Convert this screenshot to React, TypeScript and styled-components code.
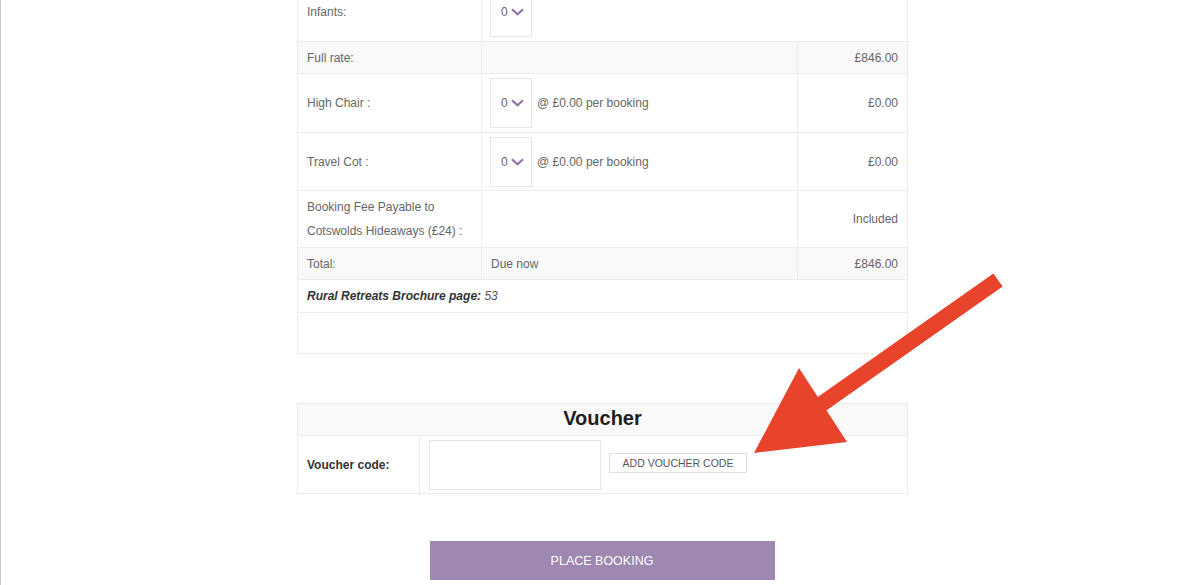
import React from 'react'
import styled, { createGlobalStyle } from 'styled-components'

const GlobalStyle = createGlobalStyle`
  html, body {
    margin: 0;
    padding: 0;
    background: #fff;
  }
  body {
    font-family: "Liberation Sans", Arial, sans-serif;
  }
`;

const Page = styled.div`
  position: relative;
  height: 585px;
  overflow: hidden;
  border-left: 1px solid #c5c9cd;
  padding-left: 3px;
  box-sizing: border-box;
`;

const Content = styled.div`
  width: 610px;
  margin: -18px auto 0;
`;

const Table = styled.table`
  width: 100%;
  border-collapse: collapse;
  table-layout: fixed;
  border: 1px solid #ececec;
  font-size: 12px;
  color: #666;
`;

const Row = styled.tr<{ $shade?: boolean; $pad?: number }>`
  background: ${p => (p.$shade ? '#f9f9f9' : '#fff')};
  td {
    padding-top: ${p => p.$pad ?? 4}px;
    padding-bottom: ${p => p.$pad ?? 4}px;
  }
`;

const Cell = styled.td<{ $right?: boolean; $tall?: number }>`
  border: 1px solid #ececec;
  padding: 4px 9px;
  line-height: 24px;
  vertical-align: middle;
  text-align: ${p => (p.$right ? 'right' : 'left')};
  height: ${p => (p.$tall ? `${p.$tall}px` : 'auto')};
  box-sizing: border-box;
`;

const OptionCell = styled(Cell)`
  padding-left: 8px;
`;

const Picker = styled.span`
  display: inline-flex;
  align-items: center;
  gap: 3px;
  box-sizing: border-box;
  width: 42px;
  height: 50px;
  padding-left: 10px;
  border: 1px solid #e6e6e6;
  background: #fff;
  vertical-align: middle;
  color: #666;
`;

const PerBooking = styled.span`
  margin-left: 5px;
  vertical-align: middle;
`;

const Brochure = styled.span`
  font-style: italic;
  color: #555;
  b {
    color: #333;
  }
`;

const VoucherTable = styled(Table)`
  margin-top: 49px;
`;

const VoucherHead = styled.th`
  background: #f9f9f9;
  border: 1px solid #ececec;
  font-size: 20px;
  font-weight: bold;
  color: #1e1e1e;
  height: 31px;
  padding: 0;
  line-height: 29px;
  vertical-align: top;
`;

const VoucherLabel = styled.td`
  border: 1px solid #ececec;
  padding: 0 9px;
  font-weight: bold;
  color: #333;
  height: 57px;
`;

const VoucherField = styled.td`
  border: 1px solid #ececec;
  padding: 0 9px;
  vertical-align: middle;
`;

const FieldRow = styled.div`
  display: flex;
  align-items: center;
  gap: 8px;
`;

const CodeInput = styled.input`
  box-sizing: border-box;
  width: 172px;
  height: 50px;
  border: 1px solid #e4e4e4;
  outline: none;
  font: inherit;
`;

const AddButton = styled.button`
  box-sizing: border-box;
  width: 138px;
  height: 20px;
  padding: 0;
  margin-bottom: 3px;
  border: 1px solid #e0e0e0;
  background: #fff;
  color: #555;
  font-family: "Liberation Sans", Arial, sans-serif;
  font-size: 10.5px;
  text-transform: uppercase;
`;

const Actions = styled.div`
  display: flex;
  justify-content: center;
  margin-top: 47px;
`;

const PlaceButton = styled.button`
  width: 345px;
  height: 39px;
  border: none;
  background: #9e87b0;
  color: #fff;
  font-family: "Liberation Sans", Arial, sans-serif;
  font-size: 12.5px;
  text-transform: uppercase;
  cursor: pointer;
`;

const Overlay = styled.svg`
  position: absolute;
  left: 0;
  top: 0;
  pointer-events: none;
`;

function Chevron() {
  return (
    <svg width="13" height="8" viewBox="0 0 13 8">
      <path d="M1 1.2 L6.5 6.2 L12 1.2" fill="none" stroke="#8f73a6" strokeWidth="2.2" />
    </svg>
  )
}

function Qty() {
  return (
    <Picker>
      0<Chevron />
    </Picker>
  )
}

function Arrow() {
  return (
    <Overlay width="1200" height="585" viewBox="0 0 1200 585">
      <line x1="997" y1="280" x2="815" y2="408" stroke="#e8432b" strokeWidth="16" />
      <polygon points="798,368 846,442 753,453" fill="#e8432b" />
    </Overlay>
  )
}

export default function App() {
  return (
    <>
      <GlobalStyle />
      <Page>
        <Content>
          <Table>
            <colgroup>
              <col style={{ width: 184 }} />
              <col style={{ width: 316 }} />
              <col style={{ width: 110 }} />
            </colgroup>
            <tbody>
              <Row>
                <Cell>Infants:</Cell>
                <OptionCell colSpan={2}><Qty /></OptionCell>
              </Row>
              <Row $shade $pad={3.5}>
                <Cell>Full rate:</Cell>
                <Cell />
                <Cell $right>£846.00</Cell>
              </Row>
              <Row>
                <Cell>High Chair :</Cell>
                <OptionCell><Qty /><PerBooking>@ £0.00 per booking</PerBooking></OptionCell>
                <Cell $right>£0.00</Cell>
              </Row>
              <Row $pad={3.5}>
                <Cell>Travel Cot :</Cell>
                <OptionCell><Qty /><PerBooking>@ £0.00 per booking</PerBooking></OptionCell>
                <Cell $right>£0.00</Cell>
              </Row>
              <Row>
                <Cell>Booking Fee Payable to Cotswolds Hideaways (£24) :</Cell>
                <Cell />
                <Cell $right>Included</Cell>
              </Row>
              <Row $shade $pad={3.5}>
                <Cell>Total:</Cell>
                <Cell>Due now</Cell>
                <Cell $right>£846.00</Cell>
              </Row>
              <Row>
                <Cell colSpan={3}>
                  <Brochure><b>Rural Retreats Brochure page:</b> 53</Brochure>
                </Cell>
              </Row>
              <Row>
                <Cell colSpan={3} $tall={41} />
              </Row>
            </tbody>
          </Table>

          <VoucherTable>
            <colgroup>
              <col style={{ width: 122 }} />
              <col style={{ width: 488 }} />
            </colgroup>
            <tbody>
              <tr>
                <VoucherHead colSpan={2}>Voucher</VoucherHead>
              </tr>
              <tr>
                <VoucherLabel>Voucher code:</VoucherLabel>
                <VoucherField>
                  <FieldRow>
                    <CodeInput type="text" />
                    <AddButton type="button">Add voucher code</AddButton>
                  </FieldRow>
                </VoucherField>
              </tr>
            </tbody>
          </VoucherTable>

          <Actions>
            <PlaceButton type="button">Place Booking</PlaceButton>
          </Actions>
        </Content>
        <Arrow />
      </Page>
    </>
  )
}
